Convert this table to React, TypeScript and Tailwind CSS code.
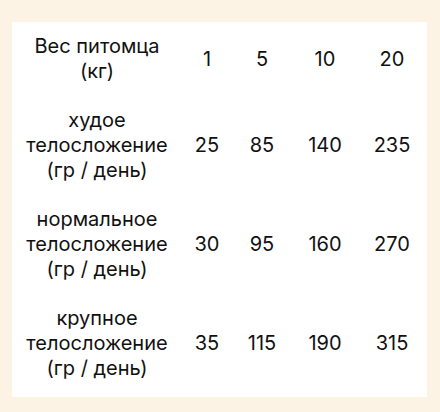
const rows = [
  { label: ["худое", "телосложение", "(гр / день)"], values: [25, 85, 140, 235] },
  { label: ["нормальное", "телосложение", "(гр / день)"], values: [30, 95, 160, 270] },
  { label: ["крупное", "телосложение", "(гр / день)"], values: [35, 115, 190, 315] },
];

const weights = [1, 5, 10, 20];

const cols = "grid grid-cols-[170px_50px_60px_66px_68px]";

export default function App() {
  return (
    <div className="min-h-[412px] w-[440px] bg-[#fdf3e4] pt-[22px] pl-[12px] font-['Inter',sans-serif] text-[20px] leading-[25px] text-[#111]">
      <div className="w-[415px] h-[375px] bg-white">
        <div className={`${cols} items-center py-3 text-center`}>
          <div>
            <div>Вес питомца</div>
            <div>(кг)</div>
          </div>
          {weights.map((w) => (
            <div key={w}>{w}</div>
          ))}
        </div>
        {rows.map((r, i) => (
          <div key={i} className={`${cols} items-center py-3 text-center`}>
            <div>
              {r.label.map((l) => (
                <div key={l}>{l}</div>
              ))}
            </div>
            {r.values.map((v) => (
              <div key={v}>{v}</div>
            ))}
          </div>
        ))}
      </div>
    </div>
  );
}
